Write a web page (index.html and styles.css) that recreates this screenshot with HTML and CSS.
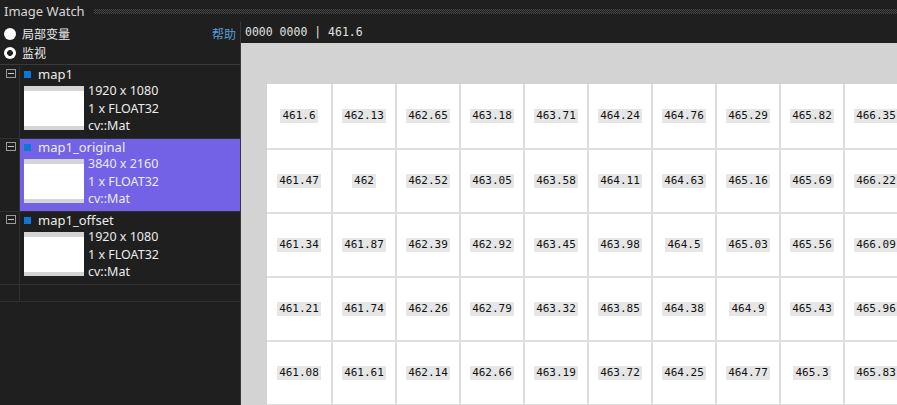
FILE: index.html
```html
<!DOCTYPE html>
<html lang="zh-CN">
<head>
<meta charset="utf-8">
<title>Image Watch</title>
<link rel="stylesheet" href="styles.css">
</head>
<body>
<div class="app">
  <div class="titlebar"><span class="title">Image Watch</span><span class="grip"></span></div>
  <div class="main">
    <aside class="side">
      <div class="modes">
        <div class="mode-row"><label class="radio"><span class="dot"></span>局部变量</label><a class="help">帮助</a></div>
        <div class="mode-row"><label class="radio"><span class="dot checked"></span>监视</label></div>
      </div>
      <div class="tree">
        <div class="item">
          <div class="gutter"><span class="toggle"></span></div>
          <div class="entry">
            <div class="name"><span class="swatch"></span>map1</div>
            <div class="detail"><div class="thumb"></div><div class="info"><div>1920 x 1080</div><div>1 x FLOAT32</div><div>cv::Mat</div></div></div>
          </div>
        </div>
        <div class="item">
          <div class="gutter"><span class="toggle"></span></div>
          <div class="entry selected">
            <div class="name"><span class="swatch"></span>map1_original</div>
            <div class="detail"><div class="thumb"></div><div class="info"><div>3840 x 2160</div><div>1 x FLOAT32</div><div>cv::Mat</div></div></div>
          </div>
        </div>
        <div class="item">
          <div class="gutter"><span class="toggle"></span></div>
          <div class="entry">
            <div class="name"><span class="swatch"></span>map1_offset</div>
            <div class="detail"><div class="thumb"></div><div class="info"><div>1920 x 1080</div><div>1 x FLOAT32</div><div>cv::Mat</div></div></div>
          </div>
        </div>
        <div class="item empty">
          <div class="gutter"></div>
          <div class="entry"></div>
        </div>
      </div>
    </aside>
    <section class="view">
      <div class="coords">0000 0000 | 461.6</div>
      <div class="canvas">
        <div class="grid">
          <div class="cell"><span class="val">461.6</span></div>
          <div class="cell"><span class="val">462.13</span></div>
          <div class="cell"><span class="val">462.65</span></div>
          <div class="cell"><span class="val">463.18</span></div>
          <div class="cell"><span class="val">463.71</span></div>
          <div class="cell"><span class="val">464.24</span></div>
          <div class="cell"><span class="val">464.76</span></div>
          <div class="cell"><span class="val">465.29</span></div>
          <div class="cell"><span class="val">465.82</span></div>
          <div class="cell"><span class="val">466.35</span></div>

          <div class="cell"><span class="val">461.47</span></div>
          <div class="cell"><span class="val">462</span></div>
          <div class="cell"><span class="val">462.52</span></div>
          <div class="cell"><span class="val">463.05</span></div>
          <div class="cell"><span class="val">463.58</span></div>
          <div class="cell"><span class="val">464.11</span></div>
          <div class="cell"><span class="val">464.63</span></div>
          <div class="cell"><span class="val">465.16</span></div>
          <div class="cell"><span class="val">465.69</span></div>
          <div class="cell"><span class="val">466.22</span></div>

          <div class="cell"><span class="val">461.34</span></div>
          <div class="cell"><span class="val">461.87</span></div>
          <div class="cell"><span class="val">462.39</span></div>
          <div class="cell"><span class="val">462.92</span></div>
          <div class="cell"><span class="val">463.45</span></div>
          <div class="cell"><span class="val">463.98</span></div>
          <div class="cell"><span class="val">464.5</span></div>
          <div class="cell"><span class="val">465.03</span></div>
          <div class="cell"><span class="val">465.56</span></div>
          <div class="cell"><span class="val">466.09</span></div>

          <div class="cell"><span class="val">461.21</span></div>
          <div class="cell"><span class="val">461.74</span></div>
          <div class="cell"><span class="val">462.26</span></div>
          <div class="cell"><span class="val">462.79</span></div>
          <div class="cell"><span class="val">463.32</span></div>
          <div class="cell"><span class="val">463.85</span></div>
          <div class="cell"><span class="val">464.38</span></div>
          <div class="cell"><span class="val">464.9</span></div>
          <div class="cell"><span class="val">465.43</span></div>
          <div class="cell"><span class="val">465.96</span></div>

          <div class="cell"><span class="val">461.08</span></div>
          <div class="cell"><span class="val">461.61</span></div>
          <div class="cell"><span class="val">462.14</span></div>
          <div class="cell"><span class="val">462.66</span></div>
          <div class="cell"><span class="val">463.19</span></div>
          <div class="cell"><span class="val">463.72</span></div>
          <div class="cell"><span class="val">464.25</span></div>
          <div class="cell"><span class="val">464.77</span></div>
          <div class="cell"><span class="val">465.3</span></div>
          <div class="cell"><span class="val">465.83</span></div>
        </div>
      </div>
    </section>
  </div>
</div>
</body>
</html>
```
FILE: styles.css
```css
* { box-sizing: border-box; }
html, body { margin: 0; padding: 0; }
body {
  background: #1f1f1f;
  font-family: "Noto Sans", "Noto Sans CJK SC", sans-serif;
  color: #e6e6e6;
  overflow: hidden;
}
.app {
  width: 897px;
  height: 405px;
  display: flex;
  flex-direction: column;
  overflow: hidden;
}
.titlebar {
  height: 22px;
  display: flex;
  align-items: center;
  padding-left: 4px;
}
.title {
  font-size: 13px;
  color: #d8d8d8;
  line-height: 22px;
}
.grip {
  flex: 1;
  height: 5px;
  margin-left: 9px;
  margin-top: 1px;
  background: conic-gradient(#474747 25%, transparent 0 50%, #474747 0 75%, transparent 0) 0 0 / 2px 2px;
}
.main {
  flex: 1;
  display: flex;
  min-height: 0;
}
.side {
  width: 241px;
  border-right: 1px solid #383838;
  display: flex;
  flex-direction: column;
}
.modes {
  height: 43px;
  padding-top: 2px;
  border-bottom: 1px solid #3a3a3a;
}
.mode-row {
  height: 19px;
  display: flex;
  align-items: center;
  justify-content: space-between;
  padding-right: 4px;
  font-size: 12px;
}
.radio {
  display: flex;
  align-items: center;
  color: #ececec;
}
.dot {
  width: 12px;
  height: 12px;
  border-radius: 50%;
  background: #ffffff;
  margin-left: 4px;
  margin-right: 6px;
}
.dot.checked {
  background: radial-gradient(circle, #1f1f1f 0 2.6px, #ffffff 3.2px);
}
.help {
  color: #5a9bd8;
}
.tree {
  padding-top: 1px;
}
.item {
  display: flex;
  height: 73px;
  border-bottom: 1px solid #303030;
}
.item.empty {
  height: 17px;
}
.gutter {
  width: 20px;
  border-right: 1px solid #303030;
  padding: 3px 0 0 6px;
}
.toggle {
  display: block;
  width: 10px;
  height: 9px;
  border: 1px solid #9a9a9a;
  position: relative;
}
.toggle::after {
  content: "";
  position: absolute;
  left: 1px;
  right: 1px;
  top: 3px;
  height: 1px;
  background: #c8c8c8;
}
.entry {
  flex: 1;
  padding-left: 4px;
}
.entry.selected {
  background: #7462e6;
}
.name {
  height: 16px;
  display: flex;
  align-items: center;
  font-size: 13px;
  color: #ececec;
}
.swatch {
  width: 7px;
  height: 7px;
  background: #0b78d8;
  margin-right: 7px;
}
.detail {
  display: flex;
}
.thumb {
  width: 60px;
  height: 44px;
  margin-top: 4px;
  background: linear-gradient(#d4d4d4 0 5px, #ffffff 5px calc(100% - 4px), #d4d4d4 calc(100% - 4px));
}
.info {
  margin-left: 4px;
  font-size: 12.5px;
  line-height: 17.5px;
  color: #ececec;
}
.view {
  flex: 1;
  display: flex;
  flex-direction: column;
  min-width: 0;
}
.coords {
  height: 21px;
  line-height: 21px;
  padding-left: 4px;
  font-family: "DejaVu Sans Mono", monospace;
  font-size: 11.5px;
  color: #e0e0e0;
  white-space: pre;
}
.canvas {
  flex: 1;
  background: #d3d3d3;
  overflow: hidden;
  padding: 41px 0 0 26px;
}
.grid {
  display: grid;
  grid-template-columns: 64px repeat(9, 62px);
  grid-template-rows: 64px repeat(4, 62px);
  gap: 2px;
  width: max-content;
  padding-bottom: 2px;
  background: #dedede;
}
.cell {
  background: #ffffff;
  display: flex;
  align-items: center;
  justify-content: center;
}
.val {
  background: #e6e6e6;
  padding: 0 2px;
  line-height: 14px;
  font-family: "DejaVu Sans Mono", monospace;
  font-size: 11px;
  color: #111111;
}
```
